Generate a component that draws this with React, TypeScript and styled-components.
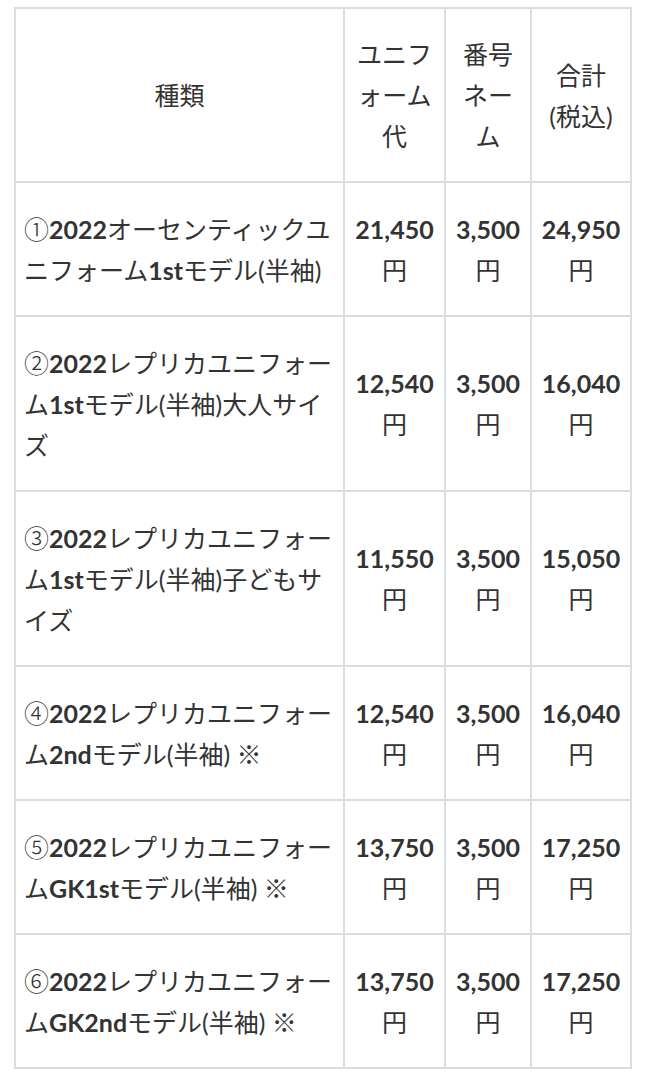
import React from "react";
import styled, { createGlobalStyle } from "styled-components";

const Global = createGlobalStyle`
  html, body { margin: 0; padding: 0; background: #ffffff; }
  body {
    font-family: "Lato", "Noto Sans CJK JP", sans-serif;
    color: #333333;
  }
`;

const Page = styled.div`
  padding: 7px 0 0 14px;
`;

const Table = styled.table`
  border-collapse: collapse;
  table-layout: fixed;
  width: 616px;
  border: 2px solid #d9dde1;
  font-size: 25px;
  line-height: 41px;
`;

const Cell = styled.td<{ $align?: "left" | "center" }>`
  border: 2px solid #d9dde1;
  padding: 25px 8px 24px;
  vertical-align: middle;
  text-align: ${(p) => p.$align ?? "center"};
  white-space: nowrap;
  font-weight: 400;
`;

const HeadCell = styled(Cell).attrs({ as: "th" })`
  font-weight: 400;
`;

const B = styled.b`
  font-weight: 700;
`;

const Circled = styled.span`
  font-family: "Noto Sans CJK JP", sans-serif;
  font-weight: 300;
  font-size: 25px;
`;

type Row = { no: string; name: React.ReactNode; uni: string; num: string; total: string };

const rows: Row[] = [
  {
    no: "①",
    name: (
      <>
        <B>2022</B>オーセンティックユ
        <br />
        ニフォーム<B>1st</B>モデル(半袖)
      </>
    ),
    uni: "21,450",
    num: "3,500",
    total: "24,950",
  },
  {
    no: "②",
    name: (
      <>
        <B>2022</B>レプリカユニフォー
        <br />
        ム<B>1st</B>モデル(半袖)大人サイ
        <br />
        ズ
      </>
    ),
    uni: "12,540",
    num: "3,500",
    total: "16,040",
  },
  {
    no: "③",
    name: (
      <>
        <B>2022</B>レプリカユニフォー
        <br />
        ム<B>1st</B>モデル(半袖)子どもサ
        <br />
        イズ
      </>
    ),
    uni: "11,550",
    num: "3,500",
    total: "15,050",
  },
  {
    no: "④",
    name: (
      <>
        <B>2022</B>レプリカユニフォー
        <br />
        ム<B>2nd</B>モデル(半袖) ※
      </>
    ),
    uni: "12,540",
    num: "3,500",
    total: "16,040",
  },
  {
    no: "⑤",
    name: (
      <>
        <B>2022</B>レプリカユニフォー
        <br />
        ム<B>GK1st</B>モデル(半袖) ※
      </>
    ),
    uni: "13,750",
    num: "3,500",
    total: "17,250",
  },
  {
    no: "⑥",
    name: (
      <>
        <B>2022</B>レプリカユニフォー
        <br />
        ム<B>GK2nd</B>モデル(半袖) ※
      </>
    ),
    uni: "13,750",
    num: "3,500",
    total: "17,250",
  },
];

const Price = ({ v }: { v: string }) => (
  <>
    <B>{v}</B>
    <br />円
  </>
);

export default function App() {
  return (
    <Page>
      <Global />
      <Table>
        <colgroup>
          <col style={{ width: 329 }} />
          <col style={{ width: 101 }} />
          <col style={{ width: 86 }} />
          <col style={{ width: 100 }} />
        </colgroup>
        <thead>
          <tr>
            <HeadCell>種類</HeadCell>
            <HeadCell>
              ユニフ
              <br />
              ォーム
              <br />代
            </HeadCell>
            <HeadCell>
              番号
              <br />
              ネー
              <br />ム
            </HeadCell>
            <HeadCell>
              合計
              <br />
              (税込)
            </HeadCell>
          </tr>
        </thead>
        <tbody>
          {rows.map((r, i) => (
            <tr key={i}>
              <Cell $align="left">
                <Circled>{r.no}</Circled>
                {r.name}
              </Cell>
              <Cell>
                <Price v={r.uni} />
              </Cell>
              <Cell>
                <Price v={r.num} />
              </Cell>
              <Cell>
                <Price v={r.total} />
              </Cell>
            </tr>
          ))}
        </tbody>
      </Table>
    </Page>
  );
}
